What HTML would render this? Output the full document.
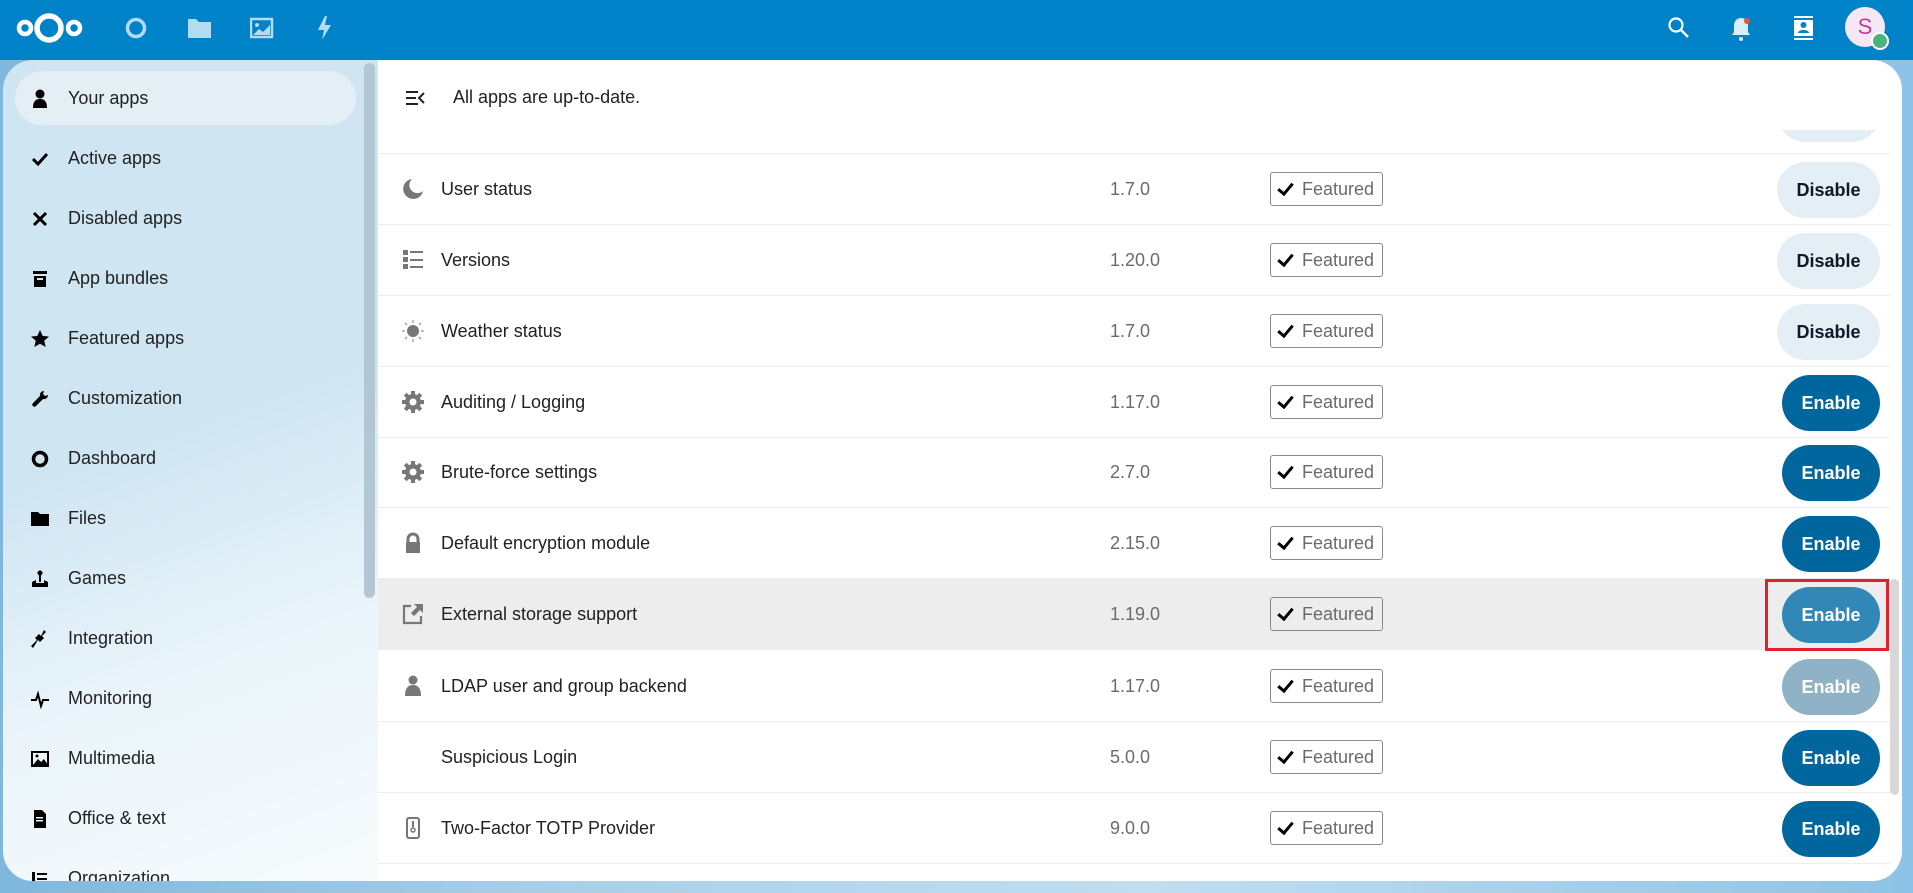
<!DOCTYPE html>
<html><head><meta charset="utf-8"><style>
*{box-sizing:border-box;margin:0;padding:0}
body{width:1913px;height:893px;overflow:hidden;font-family:"Liberation Sans",sans-serif;background:linear-gradient(90deg,#7fb7dd 0%,#a9d0ea 30%,#c2def0 60%,#8cc3e6 100%);position:relative}
#hdr{position:absolute;left:0;top:0;width:1913px;height:60px;background:#0082c9}
#side{position:absolute;left:3px;top:60px;width:375px;height:821px;border-radius:30px 0 0 30px;background:linear-gradient(160deg,#cfe5f2 0%,#cfe5f2 45%,#e9f4fa 70%,#f7fbfd 100%);overflow:hidden}
.sb{position:absolute;left:361px;top:3px;width:11px;height:535px;border-radius:6px;background:#b3c7d3}
.it{position:absolute;left:0;width:360px;height:40px;font-size:18px;color:#222;line-height:40px}
.it span{position:absolute;left:65px}
.it svg{position:absolute;left:27px;top:11px}
.act{position:absolute;left:12px;top:11px;width:341px;height:54px;border-radius:27px;background:#e3eff5}
#main{position:absolute;left:378px;top:60px;width:1524px;height:821px;background:#fff;border-radius:0 30px 30px 0;overflow:hidden}
.row{position:absolute;left:0;width:1512px;height:71px;border-bottom:1px solid #ededed;font-size:18px;color:#222}
.row .nm{position:absolute;left:63px;top:25px}
.row .v{position:absolute;left:732px;top:25px;color:#6b6b6b}
.row .f{position:absolute;left:892px;top:18px;width:113px;height:34px;border:1px solid #8a8a8a;border-radius:3px;color:#6b6b6b;font-size:18px;line-height:32px;padding-left:31px}
.row .f:before{content:"";position:absolute;left:10px;top:7px;width:6px;height:12px;border:solid #000;border-width:0 3px 3px 0;transform:rotate(40deg)}
.row .ic{position:absolute;left:24px;top:24px}
.btn{position:absolute;left:1404px;top:8px;width:98px;height:56px;border-radius:28px;font-weight:bold;font-size:18px;text-align:center;line-height:56px;color:#fff;background:#00679e}
.dis{background:#e3eff5;color:#0d1a2a;left:1399px;width:103px}
</style></head><body>
<div id="hdr">
<svg width="90" height="60" style="position:absolute;left:8px;top:0"><circle cx="41" cy="28" r="12" fill="none" stroke="#fff" stroke-width="5.5"/><circle cx="17" cy="28" r="6" fill="none" stroke="#fff" stroke-width="4.5"/><circle cx="66" cy="28" r="6" fill="none" stroke="#fff" stroke-width="4.5"/></svg>
<svg width="24" height="24" style="position:absolute;left:124px;top:16px"><circle cx="12" cy="12" r="8.5" fill="none" stroke="#b3dbf1" stroke-width="3.5"/></svg>
<svg width="24" height="24" style="position:absolute;left:188px;top:17px"><path d="M0 2h8l3 3h12v16H0z" fill="#b3dbf1"/></svg>
<svg width="24" height="24" style="position:absolute;left:250px;top:17px"><rect x="1" y="2" width="21" height="18" fill="none" stroke="#b3dbf1" stroke-width="2.5"/><circle cx="7" cy="8" r="2" fill="#b3dbf1"/><path d="M3 18l6-6 4 3 7-7v10z" fill="#b3dbf1"/></svg>
<svg width="16" height="24" style="position:absolute;left:317px;top:16px"><path d="M8 0L1 14h6l-2 10 9-15H8l2-9z" fill="#b3dbf1"/></svg>
<svg width="24" height="24" style="position:absolute;left:1667px;top:16px"><circle cx="9" cy="9" r="6.5" fill="none" stroke="#fff" stroke-width="2.2"/><path d="M14 14l7 7" stroke="#fff" stroke-width="2.5"/></svg>
<svg width="24" height="26" style="position:absolute;left:1730px;top:16px"><path d="M11 2c-5 0-7 4-7 8v6l-2 3h18l-2-3v-6c0-4-2-8-7-8z" fill="#d9eef9"/><circle cx="11" cy="23" r="2" fill="#d9eef9"/><circle cx="17" cy="5" r="3" fill="#e9562b"/></svg>
<svg width="24" height="28" style="position:absolute;left:1792px;top:14px"><rect x="2" y="2" width="19" height="2" fill="#fff"/><rect x="2" y="24" width="19" height="2" fill="#fff"/><rect x="2" y="6" width="19" height="16" rx="1" fill="#fff"/><circle cx="11.5" cy="11" r="3" fill="#0082c9"/><path d="M6 19c0-4 11-4 11 0z" fill="#0082c9"/></svg>
<div style="position:absolute;left:1845px;top:7px;width:40px;height:40px;border-radius:50%;background:#f6e8f2;color:#c23aa0;font-size:22px;text-align:center;line-height:40px">S</div>
<div style="position:absolute;left:1871px;top:32px;width:18px;height:18px;border-radius:50%;background:#49b382;border:2px solid #fff"></div>
</div>

<div id="side">
<div class="act"></div>
<div class="sb"></div>
<div class="it" style="top:18px"><svg width="20" height="20"><circle cx="10" cy="5" r="4.5"/><path d="M3 19c0-8 4-9 7-9s7 1 7 9z"/></svg><span>Your apps</span></div>
<div class="it" style="top:78px"><svg width="20" height="20"><path d="M3 10l5 5 9-10" fill="none" stroke="#000" stroke-width="3"/></svg><span>Active apps</span></div>
<div class="it" style="top:138px"><svg width="20" height="20"><path d="M4 4l12 12M16 4L4 16" stroke="#000" stroke-width="3"/></svg><span>Disabled apps</span></div>
<div class="it" style="top:198px"><svg width="20" height="20"><rect x="3" y="2" width="14" height="3"/><rect x="4" y="7" width="12" height="11"/><rect x="7" y="9" width="6" height="2" fill="#cfe5f2"/></svg><span>App bundles</span></div>
<div class="it" style="top:258px"><svg width="20" height="20"><path d="M10 1l2.7 6 6.3.5-4.8 4.2 1.5 6.3L10 14.7 4.3 18l1.5-6.3L1 7.5 7.3 7z"/></svg><span>Featured apps</span></div>
<div class="it" style="top:318px"><svg width="20" height="20"><path d="M14 2a4 4 0 0 0-4 5L3 14l-1 2 2 2 2-1 7-7a4 4 0 0 0 5-4l-3 1-2-2z"/></svg><span>Customization</span></div>
<div class="it" style="top:378px"><svg width="20" height="20"><circle cx="10" cy="10" r="6.5" fill="none" stroke="#000" stroke-width="3.5"/></svg><span>Dashboard</span></div>
<div class="it" style="top:438px"><svg width="20" height="20"><path d="M1 3h7l2 2h9v12H1z"/></svg><span>Files</span></div>
<div class="it" style="top:498px"><svg width="20" height="20"><circle cx="10" cy="4" r="2.5"/><rect x="9" y="5" width="2" height="8"/><path d="M2 18v-5l4-2v3h8v-3l4 2v5z"/></svg><span>Games</span></div>
<div class="it" style="top:558px"><svg width="20" height="20"><path d="M14 1l2 2-4 4 2 2-4 4-2-2-5 8-2-2 6-6-2-2 4-4 2 2z"/></svg><span>Integration</span></div>
<div class="it" style="top:618px"><svg width="20" height="20"><path d="M1 11h5l2-6 3 12 2-6h6" fill="none" stroke="#000" stroke-width="2"/></svg><span>Monitoring</span></div>
<div class="it" style="top:678px"><svg width="20" height="20"><rect x="2" y="3" width="16" height="14" fill="none" stroke="#000" stroke-width="2"/><path d="M3 16l5-6 3 3 3-3 4 6z"/><circle cx="7" cy="7" r="1.5"/></svg><span>Multimedia</span></div>
<div class="it" style="top:738px"><svg width="20" height="20"><path d="M4 1h8l4 4v14H4z"/><rect x="6" y="8" width="7" height="1.5" fill="#e9f4fa"/><rect x="6" y="11" width="7" height="1.5" fill="#e9f4fa"/></svg><span>Office &amp; text</span></div>
<div class="it" style="top:798px"><svg width="20" height="20"><rect x="2" y="3" width="3" height="14"/><rect x="7" y="4" width="10" height="2"/><rect x="7" y="9" width="10" height="2"/></svg><span>Organization</span></div>
</div>

<div id="main">
<svg width="22" height="20" style="position:absolute;left:27px;top:28px"><path d="M1 4h12M1 10h10M1 16h12M19 5l-5 5 5 5" fill="none" stroke="#222" stroke-width="2"/></svg>
<div style="position:absolute;left:75px;top:27px;font-size:18px;color:#222">All apps are up-to-date.</div>
<div style="position:absolute;left:1399px;top:26px;width:103px;height:56px;border-radius:28px;background:#e3eff5;clip-path:inset(44px 0 0 0)"></div>
<div style="position:absolute;left:0;top:93px;width:1512px;border-bottom:1px solid #ededed"></div>

<div class="row" style="top:94px"><svg class="ic" width="22" height="22"><path d="M10 1a10 10 0 1 0 11 12A8 8 0 0 1 10 1z" fill="#777"/></svg><span class="nm">User status</span><span class="v">1.7.0</span><span class="f">Featured</span><span class="btn dis">Disable</span></div>
<div class="row" style="top:165px"><svg class="ic" width="22" height="22"><rect x="1" y="1" width="5" height="5" fill="#777"/><rect x="1" y="8" width="5" height="5" fill="#777"/><rect x="1" y="15" width="5" height="5" fill="#777"/><rect x="8" y="2" width="13" height="2" fill="#777"/><rect x="8" y="10" width="13" height="2" fill="#777"/><rect x="8" y="17" width="13" height="2" fill="#777"/></svg><span class="nm">Versions</span><span class="v">1.20.0</span><span class="f">Featured</span><span class="btn dis">Disable</span></div>
<div class="row" style="top:236px"><svg class="ic" width="22" height="22"><circle cx="11" cy="11" r="6" fill="#777"/><path d="M11 0v3M11 19v3M0 11h3M19 11h3M3 3l2 2M17 17l2 2M3 19l2-2M17 5l2-2" stroke="#999" stroke-width="1.3"/></svg><span class="nm">Weather status</span><span class="v">1.7.0</span><span class="f">Featured</span><span class="btn dis">Disable</span></div>
<div class="row" style="top:307px"><svg class="ic" width="22" height="22"><g fill="#777"><circle cx="11" cy="11" r="8"/><rect x="9" y="0" width="4" height="22"/><rect x="0" y="9" width="22" height="4"/><rect x="9" y="0" width="4" height="22" transform="rotate(45 11 11)"/><rect x="9" y="0" width="4" height="22" transform="rotate(-45 11 11)"/></g><circle cx="11" cy="11" r="3.5" fill="#fff"/></svg><span class="nm">Auditing / Logging</span><span class="v">1.17.0</span><span class="f">Featured</span><span class="btn">Enable</span></div>
<div class="row" style="top:377px"><svg class="ic" width="22" height="22"><g fill="#777"><circle cx="11" cy="11" r="8"/><rect x="9" y="0" width="4" height="22"/><rect x="0" y="9" width="22" height="4"/><rect x="9" y="0" width="4" height="22" transform="rotate(45 11 11)"/><rect x="9" y="0" width="4" height="22" transform="rotate(-45 11 11)"/></g><circle cx="11" cy="11" r="3.5" fill="#fff"/></svg><span class="nm">Brute-force settings</span><span class="v">2.7.0</span><span class="f">Featured</span><span class="btn">Enable</span></div>
<div class="row" style="top:448px"><svg class="ic" width="22" height="22"><path d="M6 10V7a5 5 0 0 1 10 0v3" fill="none" stroke="#777" stroke-width="3"/><rect x="4" y="10" width="14" height="11" fill="#777"/></svg><span class="nm">Default encryption module</span><span class="v">2.15.0</span><span class="f">Featured</span><span class="btn">Enable</span></div>
<div class="row" style="top:519px;background:#ededed"><svg class="ic" width="22" height="22"><path d="M9 3H2v17h17v-7" fill="none" stroke="#777" stroke-width="2.2"/><path d="M12 1h9v9l-3-3-6 6-3-3 6-6z" fill="#777"/></svg><span class="nm">External storage support</span><span class="v">1.19.0</span><span class="f">Featured</span><span class="btn" style="background:#3187b6">Enable</span></div>
<div class="row" style="top:591px"><svg class="ic" width="22" height="22"><circle cx="11" cy="5" r="4.5" fill="#777"/><path d="M3 21c0-9 4-11 8-11s8 2 8 11z" fill="#777"/></svg><span class="nm">LDAP user and group backend</span><span class="v">1.17.0</span><span class="f">Featured</span><span class="btn" style="background:#8fb2c6">Enable</span></div>
<div class="row" style="top:662px"><span class="nm">Suspicious Login</span><span class="v">5.0.0</span><span class="f">Featured</span><span class="btn">Enable</span></div>
<div class="row" style="top:733px"><svg class="ic" width="22" height="22"><rect x="5" y="1" width="12" height="20" rx="2" fill="none" stroke="#777" stroke-width="2"/><circle cx="11" cy="13" r="2" fill="none" stroke="#777" stroke-width="1.5"/><rect x="10" y="4" width="2" height="6" fill="#777"/></svg><span class="nm">Two-Factor TOTP Provider</span><span class="v">9.0.0</span><span class="f">Featured</span><span class="btn">Enable</span></div>
<div style="position:absolute;left:1387px;top:519px;width:124px;height:72px;border:3px solid #e0212b"></div>
<div style="position:absolute;left:1512px;top:519px;width:9px;height:216px;border-radius:5px;background:#d8d8d8"></div>
</div>
</body></html>
